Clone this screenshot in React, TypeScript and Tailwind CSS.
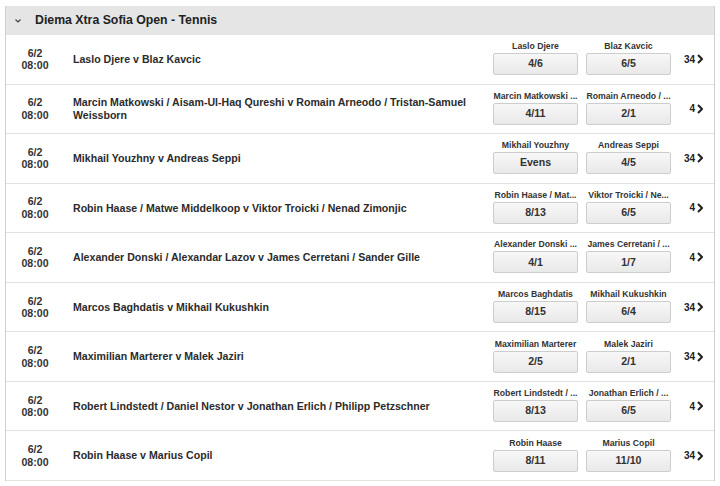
import React from 'react';

type Match = {
    title: string;
    home: string;
    away: string;
    homeOdds: string;
    awayOdds: string;
    markets: number;
};

const matches: Match[] = [
    { title: 'Laslo Djere v Blaz Kavcic', home: 'Laslo Djere', away: 'Blaz Kavcic', homeOdds: '4/6', awayOdds: '6/5', markets: 34 },
    { title: 'Marcin Matkowski / Aisam-Ul-Haq Qureshi v Romain Arneodo / Tristan-Samuel Weissborn', home: 'Marcin Matkowski ...', away: 'Romain Arneodo / ...', homeOdds: '4/11', awayOdds: '2/1', markets: 4 },
    { title: 'Mikhail Youzhny v Andreas Seppi', home: 'Mikhail Youzhny', away: 'Andreas Seppi', homeOdds: 'Evens', awayOdds: '4/5', markets: 34 },
    { title: 'Robin Haase / Matwe Middelkoop v Viktor Troicki / Nenad Zimonjic', home: 'Robin Haase / Mat...', away: 'Viktor Troicki / Ne...', homeOdds: '8/13', awayOdds: '6/5', markets: 4 },
    { title: 'Alexander Donski / Alexandar Lazov v James Cerretani / Sander Gille', home: 'Alexander Donski ...', away: 'James Cerretani / ...', homeOdds: '4/1', awayOdds: '1/7', markets: 4 },
    { title: 'Marcos Baghdatis v Mikhail Kukushkin', home: 'Marcos Baghdatis', away: 'Mikhail Kukushkin', homeOdds: '8/15', awayOdds: '6/4', markets: 34 },
    { title: 'Maximilian Marterer v Malek Jaziri', home: 'Maximilian Marterer', away: 'Malek Jaziri', homeOdds: '2/5', awayOdds: '2/1', markets: 34 },
    { title: 'Robert Lindstedt / Daniel Nestor v Jonathan Erlich / Philipp Petzschner', home: 'Robert Lindstedt / ...', away: 'Jonathan Erlich / ...', homeOdds: '8/13', awayOdds: '6/5', markets: 4 },
    { title: 'Robin Haase v Marius Copil', home: 'Robin Haase', away: 'Marius Copil', homeOdds: '8/11', awayOdds: '11/10', markets: 34 },
];

const OddsButton = ({ label, odds }: { label: string; odds: string }) => (
    <div className="w-[85px] flex flex-col">
        <div className="h-[13px] leading-[13px] text-[8.7px] font-bold text-[#333] text-center whitespace-nowrap overflow-hidden">
            {label}
        </div>
        <button className="h-[22px] w-full border border-[#cdcdcd] rounded-[2px] bg-gradient-to-b from-[#f7f7f7] to-[#e9e9e9] text-[10.6px] font-bold text-[#333] flex items-center justify-center">
            {odds}
        </button>
    </div>
);

const App = () => {
    return (
        <div className="w-[720px] h-[486px] overflow-hidden bg-white font-['Liberation_Sans',Arial,sans-serif]">
            <div className="ml-[5px] mt-[6px] w-[710px] border-x border-[#cfcfcf]">
                <div className="h-[29px] bg-[#e5e5e5] flex items-center pl-[9px]">
                    <svg width="6" height="4" viewBox="0 0 6 4" className="mr-[14px]">
                        <path d="M0.5 0.5 L3 3 L5.5 0.5" fill="none" stroke="#444" strokeWidth="1.2" />
                    </svg>
                    <span className="text-[12.3px] font-bold text-[#222]">Diema Xtra Sofia Open - Tennis</span>
                </div>

                {matches.map((m, i) => (
                    <div key={i} className="h-[49.56px] flex items-center border-b border-[#e2e2e2]">
                        <div className="w-[58px] shrink-0 text-center text-[10.6px] leading-[12.5px] font-bold text-[#333]">
                            <div>6/2</div>
                            <div>08:00</div>
                        </div>
                        <div className="flex-1 pl-[9px] pr-[8px] text-[10.6px] leading-[12.5px] font-bold text-[#2b2b2b]">
                            {m.title}
                        </div>
                        <div className="flex gap-[8px] mb-[3px]">
                            <OddsButton label={m.home} odds={m.homeOdds} />
                            <OddsButton label={m.away} odds={m.awayOdds} />
                        </div>
                        <div className="w-[43px] shrink-0 flex items-center justify-end pr-[11px] gap-[2px] text-[10px] font-bold text-[#222]">
                            <span>{m.markets}</span>
                            <svg width="6" height="10" viewBox="0 0 6 10">
                                <path d="M1 1 L5 5 L1 9" fill="none" stroke="#222" strokeWidth="2" />
                            </svg>
                        </div>
                    </div>
                ))}
            </div>
        </div>
    );
};

export default App;
